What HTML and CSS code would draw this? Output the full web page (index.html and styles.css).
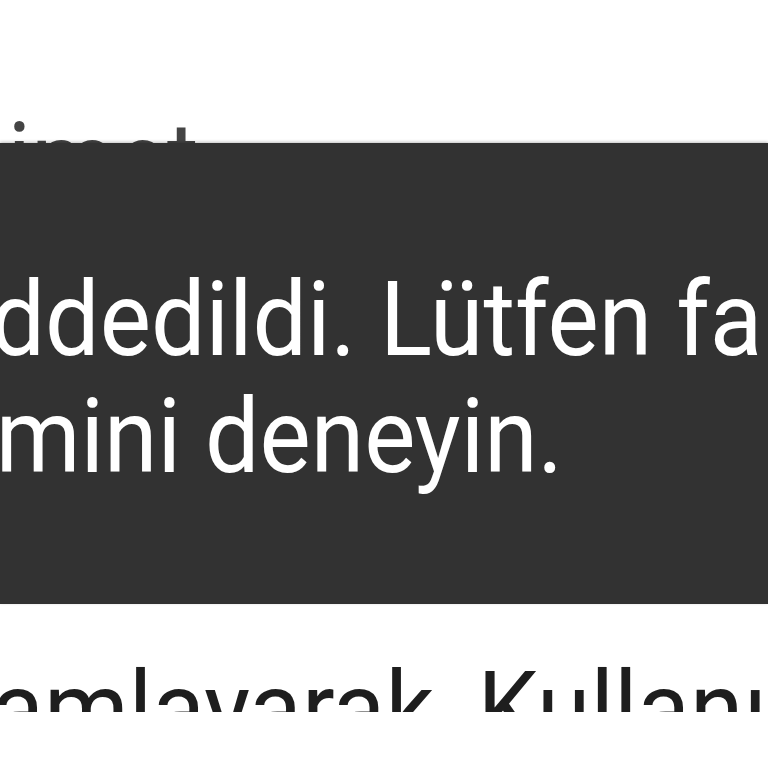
FILE: index.html
```html
<!DOCTYPE html>
<html lang="tr">
<head>
<meta charset="utf-8">
<link rel="stylesheet" href="styles.css">
</head>
<body>
<div class="page">
  <p class="body-line top-line"><span class="shift-top">imet</span></p>
  <div class="clip">
    <p class="body-line"><span class="shift-bottom">tamamlayarak, Kullanım Koşulları</span></p>
  </div>
</div>
<div class="snackbar" role="alert">
  <p class="snack-line"><span class="shift-1">Kart reddedildi. Lütfen farklı bir ödeme</span></p>
  <p class="snack-line"><span class="shift-2">yöntemini deneyin.</span></p>
</div>
</body>
</html>
```
FILE: styles.css
```css
html, body {
  margin: 0;
  padding: 0;
  width: 768px;
  height: 768px;
  overflow: hidden;
  background: #ffffff;
  font-family: Roboto, "Noto Sans", sans-serif;
}
.page {
  display: flex;
  flex-direction: column;
  padding-top: 102px;
  width: 768px;
  overflow: hidden;
}
.body-line {
  margin: 0;
  font-size: 104px;
  line-height: 117px;
  color: #1e1e1e;
  white-space: nowrap;
  transform: scaleX(0.93);
  transform-origin: 0 0;
}
.top-line {
  color: #444444;
}
.clip {
  margin-top: 432px;
  height: 61px;
  overflow: hidden;
}
.shift-top { display: inline-block; margin-left: 8px; }
.shift-bottom { display: inline-block; margin-left: -191px; }
.snackbar {
  position: absolute;
  left: 0;
  top: 143px;
  width: 768px;
  height: 461px;
  box-sizing: border-box;
  padding-top: 118px;
  background: #323232;
  box-shadow: 0 -1px 3px rgba(0,0,0,0.25);
  overflow: hidden;
}
.snack-line {
  margin: 0;
  font-size: 104px;
  line-height: 117px;
  color: #ffffff;
  white-space: nowrap;
  transform: scaleX(0.93);
  transform-origin: 0 0;
}
.shift-1 { display: inline-block; margin-left: -319px; }
.shift-2 { display: inline-block; margin-left: -259px; }
```
